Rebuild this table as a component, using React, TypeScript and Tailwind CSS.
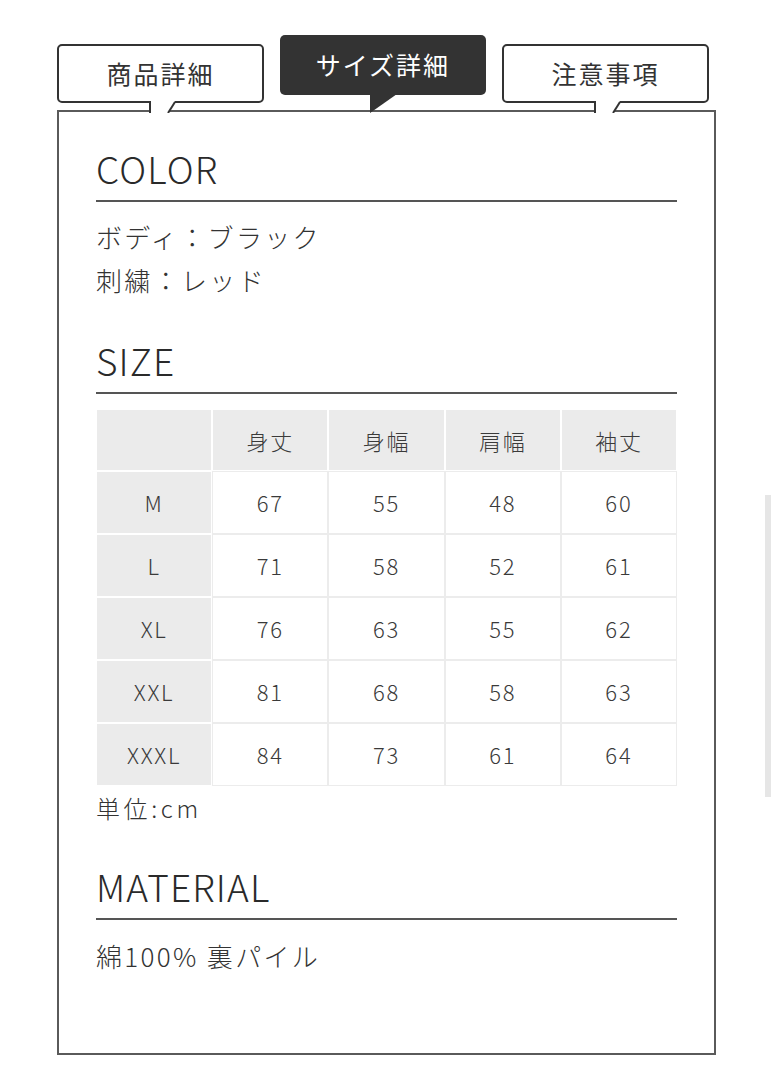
import React from 'react';

const font = { fontFamily: '"Noto Sans CJK JP", "Noto Sans", sans-serif' };

const rows = [
    ['M', '67', '55', '48', '60'],
    ['L', '71', '58', '52', '61'],
    ['XL', '76', '63', '55', '62'],
    ['XXL', '81', '68', '58', '63'],
    ['XXXL', '84', '73', '61', '64'],
];

const Heading: React.FC<{ children: React.ReactNode }> = ({ children }) => (
    <h2 className="text-[37px] leading-[48px] tracking-[0.03em] font-light text-[#2a2a2a] pb-[8px] border-b-2 border-[#555]">
        {children}
    </h2>
);

const InactiveTab: React.FC<{ label: string }> = ({ label }) => (
    <div className="relative mt-[9px] w-[207px] h-[59px] bg-white border-2 border-[#333] rounded-[5px] flex items-center justify-center">
        <span className="text-[25px] tracking-[0.08em] text-[#333]">{label}</span>
        <svg className="absolute left-[90px] top-[55px]" width="28" height="12" viewBox="0 0 28 12">
            <polygon points="1,0 26,0 19,12 1,12" fill="#fff" />
            <line x1="1" y1="0" x2="1" y2="12" stroke="#333" strokeWidth="2" />
            <line x1="26" y1="1" x2="19" y2="12" stroke="#333" strokeWidth="2" />
        </svg>
    </div>
);

const ActiveTab: React.FC<{ label: string }> = ({ label }) => (
    <div className="relative w-[206px] h-[60px] bg-[#333] rounded-[5px] flex items-center justify-center">
        <span className="text-[25px] tracking-[0.08em] text-white">{label}</span>
        <svg className="absolute left-[90px] top-[59px]" width="28" height="19" viewBox="0 0 28 19">
            <polygon points="0,0 27,0 0,19" fill="#333" />
        </svg>
    </div>
);

export default function App() {
    return (
        <div className="relative w-[773px] h-[1080px] bg-white overflow-hidden" style={font}>
            <div className="ml-[57px] w-[659px]">
                <div className="relative z-10 flex items-start gap-[16px] pt-[35px] h-[110px]">
                    <InactiveTab label="商品詳細" />
                    <ActiveTab label="サイズ詳細" />
                    <InactiveTab label="注意事項" />
                </div>

                <div className="h-[945px] border-2 border-[#5a5a5a] pt-[32px] px-[37px] text-[#333]">
                    <Heading>COLOR</Heading>
                    <div className="mt-[13px] text-[26px] leading-[43px] tracking-[0.09em] font-light">
                        <p>ボディ：ブラック</p>
                        <p>刺繍：レッド</p>
                    </div>

                    <div className="mt-[35px]">
                        <Heading>SIZE</Heading>
                    </div>
                    <div className="mt-[15px] grid grid-cols-5 text-[22px] tracking-[0.08em] text-[#3a3a3a] font-light">
                        {['', '身丈', '身幅', '肩幅', '袖丈'].map((h, i) => (
                            <div key={i} className="h-[62px] flex items-center justify-center bg-[#ebebeb] border border-white">
                                {h}
                            </div>
                        ))}
                        {rows.map((r) =>
                            r.map((c, i) => (
                                <div
                                    key={r[0] + i}
                                    className={
                                        i === 0
                                            ? 'h-[63px] flex items-center justify-center bg-[#ebebeb] border border-white'
                                            : 'h-[63px] flex items-center justify-center bg-white border border-[#ececec]'
                                    }
                                >
                                    {c}
                                </div>
                            ))
                        )}
                    </div>
                    <p className="mt-[4px] text-[24px] leading-[36px] tracking-[0.15em] font-light">単位:cm</p>

                    <div className="mt-[36px]">
                        <Heading>MATERIAL</Heading>
                    </div>
                    <p className="mt-[14px] text-[26px] leading-[43px] tracking-[0.09em] font-light">綿100% 裏パイル</p>
                </div>
            </div>

            {/* scrollbar thumb */}
            <div className="absolute left-[765px] top-[495px] w-[6px] h-[302px] bg-[#e6e6e6]" />
        </div>
    );
}
